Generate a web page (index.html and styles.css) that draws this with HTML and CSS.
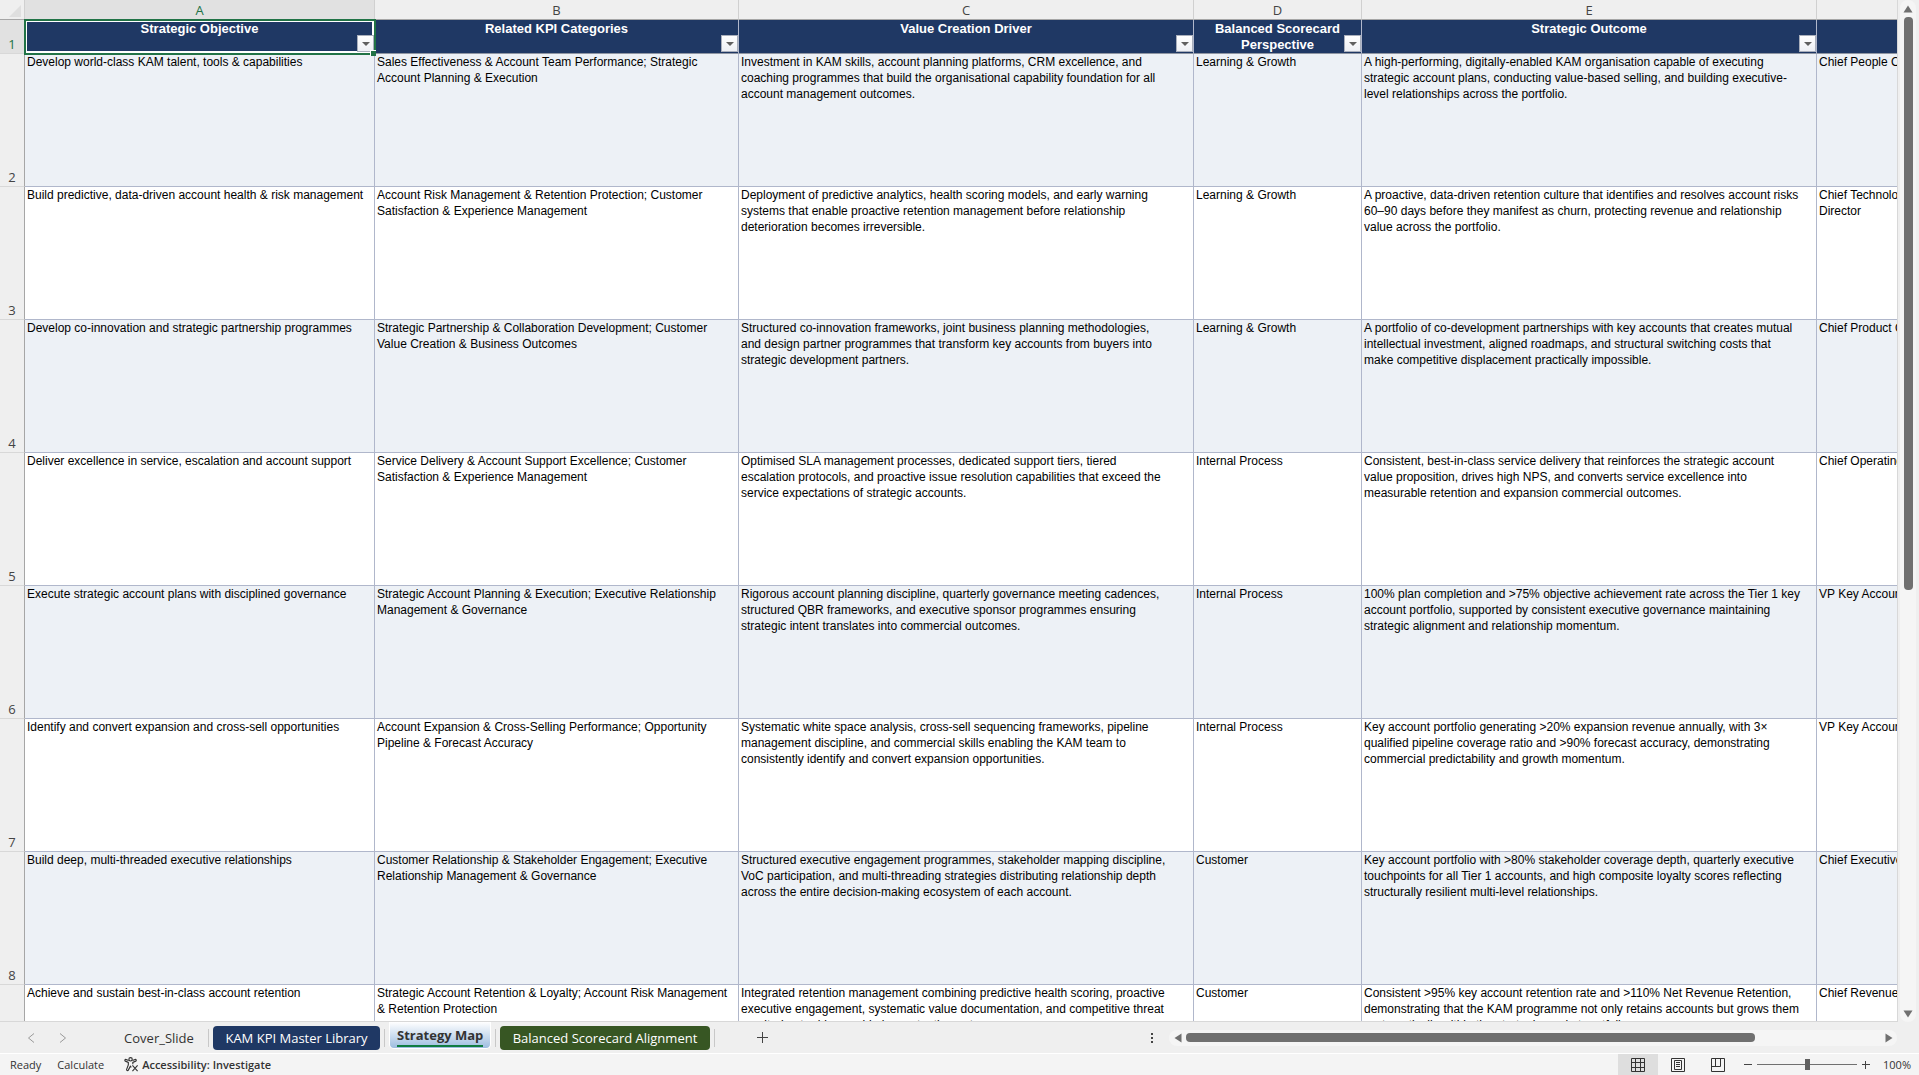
FILE: index.html
```html
<!DOCTYPE html>
<html lang="en">
<head>
  <meta charset="UTF-8" />
  <meta name="viewport" content="width=device-width, initial-scale=1.0"/>
  <title>Strategy Map</title>
  <link rel="stylesheet" href="styles.css">
</head>
<body>

<div class="workbook">
  <main class="sheet-area">
    <div class="sheet">
      <table class="grid">
        <colgroup>
          <col class="col-num">
          <col class="col-a">
          <col class="col-b">
          <col class="col-c">
          <col class="col-d">
          <col class="col-e">
          <col class="col-f">
        </colgroup>
        <thead>
          <tr class="letters">
            <th class="corner"><svg width="12" height="12" viewBox="0 0 12 12"><path d="M12 0v12H0z" fill="#dfdfdf"/></svg></th>
            <th class="active" scope="col">A</th>
            <th scope="col">B</th>
            <th scope="col">C</th>
            <th scope="col">D</th>
            <th scope="col">E</th>
            <th scope="col"></th>
          </tr>
        </thead>
        <tbody>
          <tr class="titles">
            <th class="num active" scope="row">1</th>
            <td class="selected">Strategic Objective<button class="filter" aria-label="Filter Strategic Objective"></button><span class="handle"></span></td>
            <td>Related KPI Categories<button class="filter" aria-label="Filter Related KPI Categories"></button></td>
            <td>Value Creation Driver<button class="filter" aria-label="Filter Value Creation Driver"></button></td>
            <td>Balanced Scorecard<br>Perspective<button class="filter" aria-label="Filter Balanced Scorecard Perspective"></button></td>
            <td>Strategic Outcome<button class="filter" aria-label="Filter Strategic Outcome"></button></td>
            <td></td>
          </tr>
          <tr>
            <th class="num" scope="row">2</th>
            <td>Develop world-class KAM talent, tools &amp; capabilities</td>
            <td>Sales Effectiveness &amp; Account Team Performance; Strategic<br>Account Planning &amp; Execution</td>
            <td>Investment in KAM skills, account planning platforms, CRM excellence, and<br>coaching programmes that build the organisational capability foundation for all<br>account management outcomes.</td>
            <td>Learning &amp; Growth</td>
            <td>A high-performing, digitally-enabled KAM organisation capable of executing<br>strategic account plans, conducting value-based selling, and building executive-<br>level relationships across the portfolio.</td>
            <td>Chief People Officer</td>
          </tr>
          <tr>
            <th class="num" scope="row">3</th>
            <td>Build predictive, data-driven account health &amp; risk management</td>
            <td>Account Risk Management &amp; Retention Protection; Customer<br>Satisfaction &amp; Experience Management</td>
            <td>Deployment of predictive analytics, health scoring models, and early warning<br>systems that enable proactive retention management before relationship<br>deterioration becomes irreversible.</td>
            <td>Learning &amp; Growth</td>
            <td>A proactive, data-driven retention culture that identifies and resolves account risks<br>60–90 days before they manifest as churn, protecting revenue and relationship<br>value across the portfolio.</td>
            <td>Chief Technology<br>Director</td>
          </tr>
          <tr>
            <th class="num" scope="row">4</th>
            <td>Develop co-innovation and strategic partnership programmes</td>
            <td>Strategic Partnership &amp; Collaboration Development; Customer<br>Value Creation &amp; Business Outcomes</td>
            <td>Structured co-innovation frameworks, joint business planning methodologies,<br>and design partner programmes that transform key accounts from buyers into<br>strategic development partners.</td>
            <td>Learning &amp; Growth</td>
            <td>A portfolio of co-development partnerships with key accounts that creates mutual<br>intellectual investment, aligned roadmaps, and structural switching costs that<br>make competitive displacement practically impossible.</td>
            <td>Chief Product Officer</td>
          </tr>
          <tr>
            <th class="num" scope="row">5</th>
            <td>Deliver excellence in service, escalation and account support</td>
            <td>Service Delivery &amp; Account Support Excellence; Customer<br>Satisfaction &amp; Experience Management</td>
            <td>Optimised SLA management processes, dedicated support tiers, tiered<br>escalation protocols, and proactive issue resolution capabilities that exceed the<br>service expectations of strategic accounts.</td>
            <td>Internal Process</td>
            <td>Consistent, best-in-class service delivery that reinforces the strategic account<br>value proposition, drives high NPS, and converts service excellence into<br>measurable retention and expansion commercial outcomes.</td>
            <td>Chief Operating Officer</td>
          </tr>
          <tr>
            <th class="num" scope="row">6</th>
            <td>Execute strategic account plans with disciplined governance</td>
            <td>Strategic Account Planning &amp; Execution; Executive Relationship<br>Management &amp; Governance</td>
            <td>Rigorous account planning discipline, quarterly governance meeting cadences,<br>structured QBR frameworks, and executive sponsor programmes ensuring<br>strategic intent translates into commercial outcomes.</td>
            <td>Internal Process</td>
            <td>100% plan completion and &gt;75% objective achievement rate across the Tier 1 key<br>account portfolio, supported by consistent executive governance maintaining<br>strategic alignment and relationship momentum.</td>
            <td>VP Key Accounts</td>
          </tr>
          <tr>
            <th class="num" scope="row">7</th>
            <td>Identify and convert expansion and cross-sell opportunities</td>
            <td>Account Expansion &amp; Cross-Selling Performance; Opportunity<br>Pipeline &amp; Forecast Accuracy</td>
            <td>Systematic white space analysis, cross-sell sequencing frameworks, pipeline<br>management discipline, and commercial skills enabling the KAM team to<br>consistently identify and convert expansion opportunities.</td>
            <td>Internal Process</td>
            <td>Key account portfolio generating &gt;20% expansion revenue annually, with 3×<br>qualified pipeline coverage ratio and &gt;90% forecast accuracy, demonstrating<br>commercial predictability and growth momentum.</td>
            <td>VP Key Accounts</td>
          </tr>
          <tr>
            <th class="num" scope="row">8</th>
            <td>Build deep, multi-threaded executive relationships</td>
            <td>Customer Relationship &amp; Stakeholder Engagement; Executive<br>Relationship Management &amp; Governance</td>
            <td>Structured executive engagement programmes, stakeholder mapping discipline,<br>VoC participation, and multi-threading strategies distributing relationship depth<br>across the entire decision-making ecosystem of each account.</td>
            <td>Customer</td>
            <td>Key account portfolio with &gt;80% stakeholder coverage depth, quarterly executive<br>touchpoints for all Tier 1 accounts, and high composite loyalty scores reflecting<br>structurally resilient multi-level relationships.</td>
            <td>Chief Executive Officer</td>
          </tr>
          <tr>
            <th class="num" scope="row">9</th>
            <td>Achieve and sustain best-in-class account retention</td>
            <td>Strategic Account Retention &amp; Loyalty; Account Risk Management<br>&amp; Retention Protection</td>
            <td>Integrated retention management combining predictive health scoring, proactive<br>executive engagement, systematic value documentation, and competitive threat<br>monitoring to drive world-class retention outcomes.</td>
            <td>Customer</td>
            <td>Consistent &gt;95% key account retention rate and &gt;110% Net Revenue Retention,<br>demonstrating that the KAM programme not only retains accounts but grows them<br>systematically within the strategic market portfolio.</td>
            <td>Chief Revenue Officer</td>
          </tr>
        </tbody>
      </table>
    </div>
    <div class="vscroll">
      <button class="arrow" aria-label="Scroll up"><svg width="10" height="8" viewBox="0 0 10 8"><path d="M5 0.5L9.5 7.5h-9z"/></svg></button>
      <div class="vtrack"><div class="vthumb"></div></div>
      <button class="arrow" aria-label="Scroll down"><svg width="10" height="8" viewBox="0 0 10 8"><path d="M5 7.5L9.5 0.5h-9z"/></svg></button>
    </div>
  </main>

  <nav class="tabbar">
    <div class="tabs">
      <button class="nav-btn" aria-label="Previous sheet"><svg width="8" height="10" viewBox="0 0 8 10"><path d="M7 0.5L1.5 5L7 9.5"/></svg></button>
      <button class="nav-btn" aria-label="Next sheet"><svg width="8" height="10" viewBox="0 0 8 10"><path d="M1 0.5L6.5 5L1 9.5"/></svg></button>
      <button class="tab plain">Cover_Slide</button>
      <span class="divider"></span>
      <button class="tab blue">KAM KPI Master Library</button>
      <span class="divider"></span>
      <button class="tab current"><span>Strategy Map</span></button>
      <span class="divider"></span>
      <button class="tab green">Balanced Scorecard Alignment</button>
      <span class="divider"></span>
      <button class="add" aria-label="New sheet"><svg width="11" height="11" viewBox="0 0 11 11"><path d="M5.5 0v11M0 5.5h11"/></svg></button>
    </div>
    <div class="grip"><i></i><i></i><i></i></div>
    <div class="hscroll">
      <button class="arrow" aria-label="Scroll left"><svg width="8" height="10" viewBox="0 0 8 10"><path d="M0.5 5L7.5 0.5v9z"/></svg></button>
      <div class="htrack"><div class="hthumb"></div></div>
      <button class="arrow" aria-label="Scroll right"><svg width="8" height="10" viewBox="0 0 8 10"><path d="M7.5 5L0.5 0.5v9z"/></svg></button>
    </div>
  </nav>

  <footer class="status">
    <span class="state">Ready</span>
    <span class="state">Calculate</span>
    <button class="access">
      <svg width="15" height="15" viewBox="0 0 16 16" fill="none" stroke="#333" stroke-width="1.2">
        <circle cx="7" cy="2.5" r="1.8"/>
        <path d="M5 3.8L2.2 2.6C1 2.2 0.5 3.9 1.5 4.4L4.6 5.8V8.5L2.8 13.2C2.5 14.6 4 15 4.6 14L6.8 9.8L7.8 11M9 3.8l2.8-1.2c1.2-0.4 1.7 1.3 0.7 1.8L9.4 5.8v2"/>
        <path d="M9 9l5.5 6M14.5 9L9 15"/>
      </svg>
      Accessibility: Investigate
    </button>
    <div class="views">
      <button class="view on" aria-label="Normal"><svg width="14" height="14" viewBox="0 0 14 14"><path d="M0.5 0.5h13v13h-13zM4.5 0.5v13M9.5 0.5v13M0.5 4.5h13M0.5 9.5h13"/></svg></button>
      <button class="view" aria-label="Page Layout"><svg width="14" height="14" viewBox="0 0 14 14"><path d="M0.5 0.5h13v13h-13zM3.5 2.5h7v9h-7zM5 4.5h4M5 6.5h4M5 8.5h4"/></svg></button>
      <button class="view" aria-label="Page Break Preview"><svg width="14" height="14" viewBox="0 0 14 14"><path d="M0.5 0.5h13v13h-13zM4.5 0.5v8M9.5 0.5v8M0.5 8.5h9"/></svg></button>
    </div>
    <div class="zoom">
      <button class="zoom-btn" aria-label="Zoom out"><svg width="8" height="8" viewBox="0 0 8 8"><path d="M0 3.5h8"/></svg></button>
      <input class="slider" type="range" min="0" max="100" value="50" aria-label="Zoom">
      <button class="zoom-btn" aria-label="Zoom in"><svg width="8" height="8" viewBox="0 0 8 8"><path d="M0 3.5h8M3.5 0v8"/></svg></button>
      <span class="percent">100%</span>
    </div>
  </footer>
</div>

</body>
</html>
```
FILE: styles.css
```css
* {
  box-sizing: border-box;
}

body {
  margin: 0;
  font-family: "Segoe UI", "Open Sans", sans-serif;
  color: #333;
  background: #efefef;
}

button {
  border: none;
  padding: 0;
  background: none;
  font-family: inherit;
  color: inherit;
}

svg {
  display: block;
}

.workbook {
  height: 100vh;
  display: flex;
  flex-direction: column;
}

/* Sheet */
.sheet-area {
  flex: 1;
  min-height: 0;
  display: flex;
}

.sheet {
  flex: 1;
  min-width: 0;
  overflow: hidden;
  border-right: 1px solid #d8d8d8;
  border-bottom: 1px solid #d8d8d8;
}

.grid {
  table-layout: fixed;
  width: 2000px;
  border-collapse: separate;
  border-spacing: 0;
  font-family: "Liberation Sans", Arial, sans-serif;
  font-size: 12px;
  line-height: 16px;
  color: #000;
}

.col-num { width: 25px; }
.col-a { width: 350px; }
.col-b { width: 364px; }
.col-c { width: 455px; }
.col-d { width: 168px; }
.col-e { width: 455px; }

.letters th {
  height: 20px;
  padding: 1px 0 0;
  background: #efefef;
  border-right: 1px solid #d0d0d0;
  border-bottom: 1px solid #a6a6a6;
  font-family: "Segoe UI", "Open Sans", sans-serif;
  font-size: 13px;
  font-weight: normal;
  line-height: 18px;
  color: #444;
}

.letters .corner {
  padding: 0 3px 2px 9px;
  vertical-align: bottom;
}

.letters .active,
.grid .num.active {
  background: #e1e1e1;
  color: #217346;
}

.grid .num {
  padding: 0 0 1px;
  vertical-align: bottom;
  text-align: center;
  background: #efefef;
  border-right: 1px solid #a6a6a6;
  border-bottom: 1px solid #d8d8d8;
  font-family: "Segoe UI", "Open Sans", sans-serif;
  font-size: 13px;
  font-weight: normal;
  color: #444;
}

.grid td {
  height: 133px;
  padding: 0 0 0 2px;
  vertical-align: top;
  white-space: nowrap;
  background: #fff;
  border-right: 1px solid #b0b7cb;
  border-bottom: 1px solid #b0b7cb;
}

.grid tr:nth-child(even) td {
  background: #edf1f6;
}

.grid .titles td {
  position: relative;
  height: 34px;
  padding: 1px 0 0;
  text-align: center;
  background: #1f3864;
  border-bottom-color: #8f96a3;
  font-size: 13px;
  font-weight: bold;
  line-height: 16px;
  color: #fff;
}

.grid .titles .selected {
  box-shadow: inset 0 0 0 2px #fff;
  outline: 2px solid #217346;
  outline-offset: -1px;
  z-index: 1;
}

.filter {
  position: absolute;
  right: 0;
  bottom: 1px;
  width: 17px;
  height: 17px;
  border: 1px solid #a9afbc;
  background: linear-gradient(#fff, #eef0f5);
}

.filter::after {
  content: "";
  position: absolute;
  left: 4px;
  top: 6px;
  border: 4px solid transparent;
  border-top-color: #606060;
  border-bottom: none;
}

.handle {
  position: absolute;
  right: -2px;
  bottom: -3px;
  width: 6px;
  height: 6px;
  background: #217346;
  border-top: 1px solid #fff;
  border-left: 1px solid #fff;
}

/* Scroll bars */
.arrow {
  display: flex;
  align-items: center;
  justify-content: center;
  fill: #707070;
}

.vscroll {
  width: 16px;
  margin: 0 3px 0 2px;
  display: flex;
  flex-direction: column;
  background: #f5f5f5;
  border-radius: 8px;
}

.vscroll .arrow {
  height: 17px;
}

.vtrack {
  flex: 1;
}

.vthumb {
  width: 9px;
  height: 58%;
  margin: 0 auto;
  border-radius: 4px;
  background: #707070;
}

.hscroll {
  width: 728px;
  height: 16px;
  margin-right: 22px;
  display: flex;
  align-items: center;
  background: #f5f5f5;
  border-radius: 8px;
}

.hscroll .arrow {
  width: 17px;
}

.htrack {
  flex: 1;
}

.hthumb {
  width: 82%;
  height: 9px;
  border-radius: 4px;
  background: #707070;
}

/* Sheet tabs */
.tabbar {
  height: 32px;
  display: flex;
  align-items: center;
  border-bottom: 1px solid #fff;
}

.tabs {
  flex: 1;
  height: 100%;
  display: flex;
  align-items: center;
}

.nav-btn {
  width: 32px;
  height: 24px;
  display: flex;
  align-items: center;
  justify-content: center;
  fill: none;
  stroke: #999;
}

.nav-btn:first-child {
  margin-left: 15px;
}

.tab {
  height: 24px;
  border-radius: 4px;
  font-size: 13px;
  line-height: 24px;
  white-space: nowrap;
}

.plain {
  width: 98px;
  margin-left: 31px;
}

.blue {
  width: 167px;
  margin: 0 4px;
  color: #fff;
  background: #1f3864;
}

.green {
  width: 210px;
  margin: 0 4px;
  color: #fff;
  background: #375623;
}

.current {
  width: 102px;
  height: 27px;
  margin: 0 4px;
  align-self: flex-start;
  border: 1px solid #fff;
  border-top: none;
  border-radius: 0 0 5px 5px;
  background: linear-gradient(#fff, #9dbde0);
  font-weight: bold;
}

.current span {
  display: block;
  width: 86px;
  height: 24px;
  margin: 0 auto;
  border-bottom: 2px solid #107c41;
}

.divider {
  width: 1px;
  height: 18px;
  background: #c8c8c8;
}

.add {
  margin-left: 42px;
  fill: none;
  stroke: #444;
}

.grip {
  margin-right: 16px;
  display: grid;
  gap: 2px;
}

.grip i {
  width: 2px;
  height: 2px;
  background: #444;
}

/* Status bar */
.status {
  height: 21px;
  padding: 0 8px 0 10px;
  display: flex;
  align-items: center;
  background: #f4f4f4;
  font-size: 11px;
}

.state {
  margin-right: 16px;
}

.access {
  margin-left: 4px;
  display: flex;
  align-items: center;
  gap: 3px;
  font-size: 11px;
  font-weight: 600;
}

.views {
  height: 100%;
  margin-left: auto;
  display: flex;
}

.view {
  width: 40px;
  display: flex;
  align-items: center;
  justify-content: center;
  fill: none;
  stroke: #333;
}

.view.on {
  background: #dedede;
}

.zoom {
  margin-left: 6px;
  display: flex;
  align-items: center;
  gap: 5px;
}

.zoom-btn {
  fill: none;
  stroke: #444;
}

.slider {
  appearance: none;
  width: 100px;
  height: 12px;
  margin: 0;
  background: linear-gradient(#707070, #707070) center / 100% 1px no-repeat;
}

.slider::-webkit-slider-thumb {
  appearance: none;
  width: 5px;
  height: 11px;
  background: #606060;
}

.percent {
  margin-left: 8px;
}
```
